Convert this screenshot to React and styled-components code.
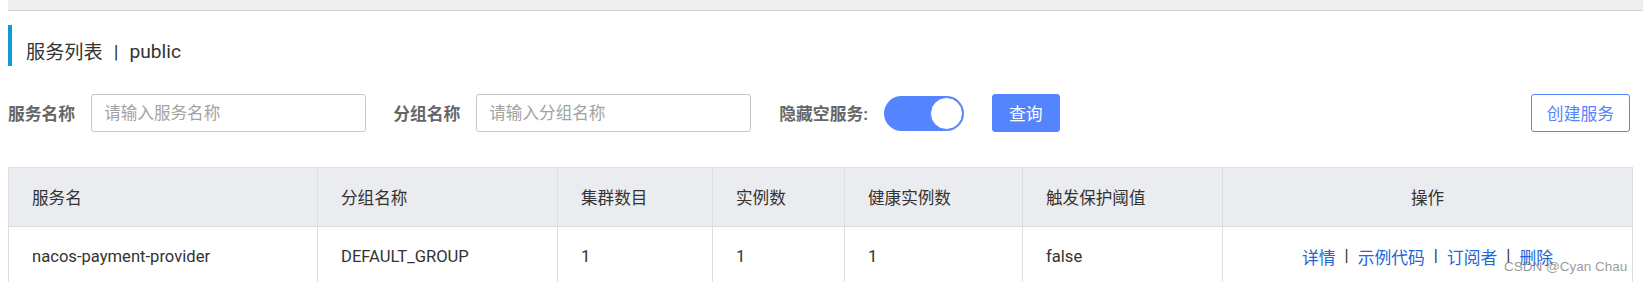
import React from "react";
import styled, { createGlobalStyle } from "styled-components";

const GlobalStyle = createGlobalStyle`
	body {
		margin: 0;
		background: #fff;
		font-family: Roboto, "Noto Sans CJK SC", sans-serif;
		color: #333;
	}
`;

const Page = styled.div`
	width: 1643px;
	padding-left: 8px;
	box-sizing: border-box;
	position: relative;
`;

const TopBar = styled.div`
	height: 10px;
	background: #eeeeee;
	border-bottom: 1px solid #d3d3d3;
`;

const Title = styled.h2`
	display: flex;
	align-items: center;
	height: 41px;
	box-sizing: border-box;
	margin: 14px 0 0;
	padding: 11px 0 0 14px;
	border-left: 4px solid #0f9bd6;
	font-size: 19.2px;
	font-weight: 400;
	color: #333;
	& .sep {
		margin: 0 11px;
	}
`;

const FilterRow = styled.div`
	display: flex;
	align-items: center;
	justify-content: space-between;
	width: 1622px;
	margin-top: 28px;
`;

const FilterGroup = styled.div`
	display: flex;
	align-items: center;
`;

const Field = styled.div`
	display: flex;
	align-items: center;
	gap: 16px;
	margin-right: ${(props) => props.$gap || 27}px;
`;

const Label = styled.span`
	font-size: 16.8px;
	font-weight: 700;
	color: #666;
	white-space: nowrap;
`;

const Input = styled.input`
	width: 275px;
	height: 38px;
	box-sizing: border-box;
	padding: 0 12px;
	border: 1px solid #c4c6cf;
	border-radius: 3px;
	font-family: inherit;
	font-size: 16.6px;
	color: #333;
	outline: none;
	&::placeholder {
		color: #a3a3a3;
	}
`;

const Switch = styled.div`
	display: flex;
	align-items: center;
	justify-content: flex-end;
	width: 80px;
	height: 35px;
	box-sizing: border-box;
	padding: 0 1px;
	border-radius: 18px;
	background: #5584ff;
	& span {
		width: 33px;
		height: 33px;
		border-radius: 50%;
		background: #fff;
		box-sizing: border-box;
		border: 1px solid #5584ff;
	}
`;

const Button = styled.button`
	height: 38px;
	padding: 0 ${(props) => (props.$outline ? 15 : 16)}px;
	border-radius: 3px;
	border: 1px solid #5584ff;
	background: ${(props) => (props.$outline ? "#fff" : "#5584ff")};
	color: ${(props) => (props.$outline ? "#5584ff" : "#fff")};
	font-family: inherit;
	font-size: 16.8px;
	cursor: pointer;
`;

const Table = styled.table`
	margin-top: 35px;
	width: 1624px;
	table-layout: fixed;
	border-collapse: collapse;
	border: 1px solid #dcdee3;
	font-size: 16.6px;
	color: #333;
`;

const Th = styled.th`
	height: 58px;
	padding: 0 0 0 ${(props) => (props.$center ? 0 : 23)}px;
	background: #ebecf0;
	border: 1px solid #dcdee3;
	font-weight: 400;
	text-align: ${(props) => (props.$center ? "center" : "left")};
`;

const Td = styled.td`
	height: 59px;
	padding: 0 0 0 ${(props) => (props.$center ? 0 : 23)}px;
	border: 1px solid #dcdee3;
	text-align: ${(props) => (props.$center ? "center" : "left")};
`;

const Actions = styled.div`
	display: flex;
	justify-content: center;
	gap: 9px;
	font-size: 16.8px;
	& a {
		color: #2266d4;
		text-decoration: none;
	}
	& i {
		font-style: normal;
		color: #333;
	}
`;

const Watermark = styled.span`
	position: absolute;
	left: 1504px;
	top: 259px;
	font-family: "Liberation Sans", sans-serif;
	font-size: 13.5px;
	color: rgba(120, 120, 120, 0.75);
	pointer-events: none;
`;

const columns = [
	{ name: "服务名", width: 309 },
	{ name: "分组名称", width: 240 },
	{ name: "集群数目", width: 155 },
	{ name: "实例数", width: 132 },
	{ name: "健康实例数", width: 178 },
	{ name: "触发保护阈值", width: 200 },
	{ name: "操作", width: 410, center: true },
];

const rows = [
	{
		name: "nacos-payment-provider",
		group: "DEFAULT_GROUP",
		clusters: 1,
		instances: 1,
		healthy: 1,
		threshold: "false",
	},
];

const actions = ["详情", "示例代码", "订阅者", "删除"];

function App() {
	return (
		<Page>
			<GlobalStyle />
			<TopBar />
			<Title>
				服务列表<span className="sep">|</span>public
			</Title>
			<FilterRow>
				<FilterGroup>
					<Field>
						<Label>服务名称</Label>
						<Input placeholder="请输入服务名称" />
					</Field>
					<Field $gap={28}>
						<Label>分组名称</Label>
						<Input placeholder="请输入分组名称" />
					</Field>
					<Field $gap={28}>
						<Label>隐藏空服务:</Label>
						<Switch>
							<span />
						</Switch>
					</Field>
					<Button>查询</Button>
				</FilterGroup>
				<Button $outline>创建服务</Button>
			</FilterRow>
			<Table>
				<colgroup>
					{columns.map((col) => (
						<col key={col.name} style={{ width: col.width }} />
					))}
				</colgroup>
				<thead>
					<tr>
						{columns.map((col) => (
							<Th key={col.name} $center={col.center}>
								{col.name}
							</Th>
						))}
					</tr>
				</thead>
				<tbody>
					{rows.map((row) => (
						<tr key={row.name}>
							<Td>{row.name}</Td>
							<Td>{row.group}</Td>
							<Td>{row.clusters}</Td>
							<Td>{row.instances}</Td>
							<Td>{row.healthy}</Td>
							<Td>{row.threshold}</Td>
							<Td $center>
								<Actions>
									{actions.map((a, i) => (
										<React.Fragment key={a}>
											{i > 0 && <i>|</i>}
											<a href="#">{a}</a>
										</React.Fragment>
									))}
								</Actions>
							</Td>
						</tr>
					))}
				</tbody>
			</Table>
			<Watermark>CSDN @Cyan Chau</Watermark>
		</Page>
	);
}

export default App;
